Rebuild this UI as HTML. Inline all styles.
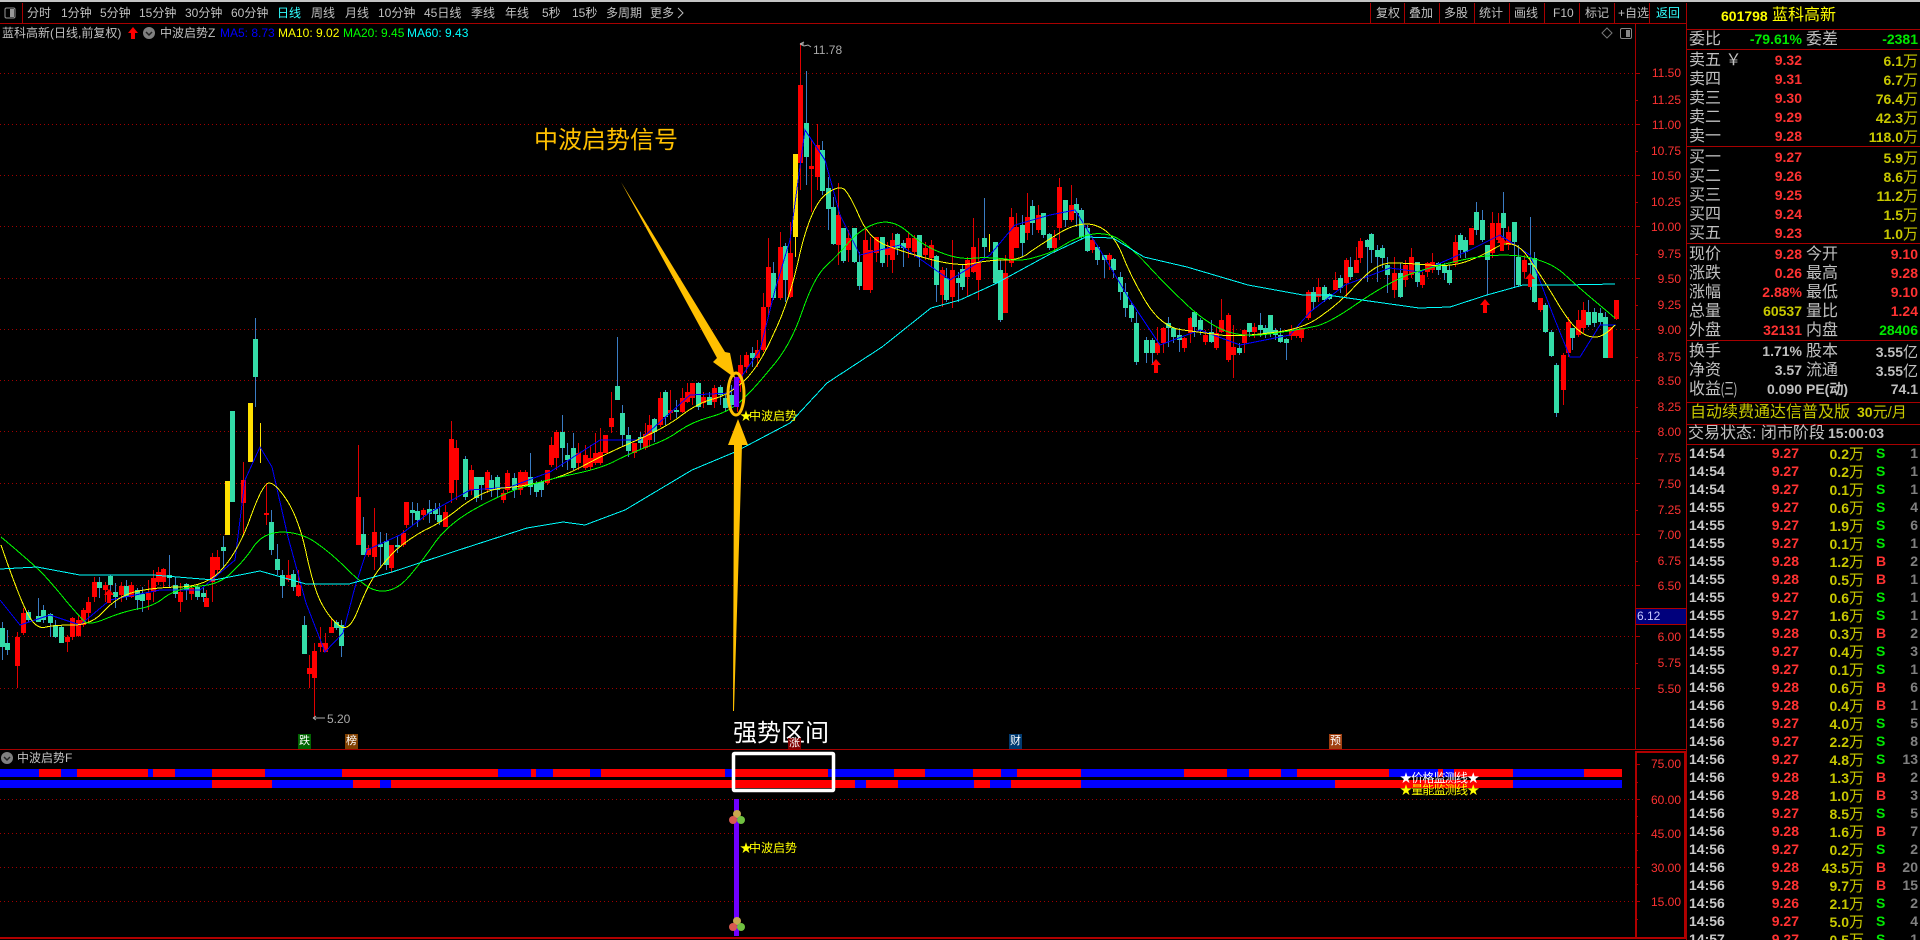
<!DOCTYPE html>
<html lang="zh"><head><meta charset="utf-8"><title>蓝科高新</title>
<style>
html,body{margin:0;padding:0;background:#000;}
#p{position:relative;width:1920px;height:940px;overflow:hidden;background:#000;font-family:"Liberation Sans","WenQuanYi Zen Hei","Noto Sans CJK SC",sans-serif;color:#c0c0c0;}
#p svg{position:absolute;left:0;top:0;}
.a{position:absolute;white-space:nowrap;}
.tb{font-size:12px;line-height:16px;top:5px;color:#c0c0c0;}
.ax{position:absolute;right:239px;font-size:12px;line-height:14px;color:#ff3232;}
.r{position:absolute;left:1687px;width:233px;height:19px;line-height:19px;}
.r>span{position:absolute;white-space:nowrap;top:0;}
.l{left:2px;font-size:16px;color:#c0c0c0;}
.l2{left:119px;font-size:16px;color:#c0c0c0;}
.p{right:118px;font:bold 14px/19px "Liberation Sans",sans-serif;color:#ff3232;}
.v{right:2px;font:bold 14px/19px "Liberation Sans",sans-serif;color:#c8c800;}
.v i,.k i{font:normal 15px/19px "WenQuanYi Zen Hei","Noto Sans CJK SC",sans-serif;}
.q{color:#ff3232;}.gy{color:#c0c0c0;}.gn{color:#00e800;}
.t{position:absolute;left:1687px;width:233px;height:18px;line-height:18px;overflow:hidden;font:bold 14px/18px "Liberation Sans",sans-serif;}
.t span{position:absolute;top:0;white-space:nowrap;}
.m{left:2px;color:#c8c8c8;}
.c{right:121px;color:#ff3232;}
.k{right:56px;color:#c8c800;}
.f{left:189px;}
.n{right:2px;color:#808080;}
.st{position:absolute;width:13px;height:15px;line-height:15px;font-size:11px;text-align:center;color:#fff;top:734px;}
.sg{letter-spacing:-3px;}
</style></head><body><div id="p">
<svg width="1920" height="940" viewBox="0 0 1920 940">
<rect x="0" y="0" width="1920" height="2" fill="#c4c4c4"/>
<g fill="none" stroke="#a00000" stroke-width="1" stroke-dasharray="1 3">
<path d="M0 73.5H1635M0 124.5H1635M0 175.5H1635M0 226.5H1635M0 278.5H1635M0 329.5H1635M0 380.5H1635M0 431.5H1635M0 483.5H1635M0 534.5H1635M0 585.5H1635M0 636.5H1635M0 688.5H1635M0 799.5H1635M0 833.5H1635M0 867.5H1635M0 901.5H1635"/>
</g>
<g shape-rendering="crispEdges" fill="none">
<path stroke="#a80000" d="M0 23.5H1686M22.5 3V23M1370.5 3V23M1404.5 3V23M1439.5 3V23M1474.5 3V23M1509.5 3V23M1544.5 3V23M1579.5 3V23M1614.5 3V23M1649.5 3V23M1635.5 23V749M1686.5 3V940M0 749.5H1686M1686 29.5H1920M1686 49.5H1920M1686 146.5H1920M1686 243.5H1920M1686 340.5H1920M1686 402.5H1920M1686 424.5H1920M1686 444.5H1920M1635 73.5H1640M1635 100.5H1638M1635 124.5H1640M1635 151.5H1638M1635 175.5H1640M1635 202.5H1638M1635 226.5H1640M1635 254.5H1638M1635 278.5H1640M1635 305.5H1638M1635 329.5H1640M1635 357.5H1638M1635 380.5H1640M1635 407.5H1638M1635 431.5H1640M1635 458.5H1638M1635 483.5H1640M1635 510.5H1638M1635 534.5H1640M1635 561.5H1638M1635 585.5H1640M1635 636.5H1640M1635 663.5H1638M1635 688.5H1640M1635 764.5H1640M1635 782.5H1638M1635 799.5H1640M1635 816.5H1638M1635 833.5H1640M1635 850.5H1638M1635 867.5H1640M1635 884.5H1638M1635 901.5H1640M1635 919.5H1638"/>
<path stroke="#b00000" stroke-width="2" d="M1636 751V939M1685 751V939M1635 752H1686M0 938H1686"/>
</g>
<rect x="1635.5" y="608.5" width="51" height="16" fill="#00007c" stroke="#b00000"/>
<!-- bars -->
<g shape-rendering="crispEdges">
<rect x="0" y="769" width="1622" height="8" fill="#0000ff"/>
<path fill="#f00" d="M39 769H61V777H39ZM77 769H148V777H77ZM153 769H175V777H153ZM212 769H265V777H212ZM342 769H498V777H342ZM531 769H536V777H531ZM553 769H590V777H553ZM601 769H725V777H601ZM733 769H828V777H733ZM894 769H925V777H894ZM973 769H1001V777H973ZM1017 769H1081V777H1017ZM1184 769H1227V777H1184ZM1249 769H1281V777H1249ZM1297 769H1389V777H1297ZM1438 769H1443V777H1438ZM1454 769H1513V777H1454ZM1584 769H1622V777H1584Z"/>
<rect x="0" y="780" width="1622" height="8" fill="#0000ff"/>
<path fill="#f00" d="M212 780H272V788H212ZM353 780H380V788H353ZM391 780H855V788H391ZM866 780H898V788H866ZM974 780H990V788H974ZM1011 780H1081V788H1011ZM1335 780H1513V788H1335Z"/>
</g>
<!-- candles -->
<g transform="translate(.5 0)" fill="none" shape-rendering="crispEdges">
<path stroke="#e00000" stroke-width="1" d="M17 632V688M23 608V635M67 635V652M72 617V640M78 615V637M83 608V627M88 597V623M94 577V602M105 582V602M121 582V602M131 582V598M148 580V610M153 570V602M158 567V585M163 568V588M180 583V612M191 585V600M206 590V607M212 553V602M217 550V575M243 462V535M266 483V525M288 560V582M298 570V597M309 655V688M314 643V717M320 627V652M325 633V652M331 618V633M358 445V545M368 545V557M374 508V570M391 545V573M403 530V547M406 502V528M423 508V520M445 505V527M451 421V503M456 440V500M471 465V495M487 470V493M503 490V503M507 470V493M520 470V495M525 470V487M547 470V485M551 437V467M556 430V470M578 443V470M585 445V470M590 445V470M595 433V465M600 428V465M605 435V453M611 392V433M634 443V458M645 423V450M649 415V447M660 392V427M670 390V420M682 388V413M687 383V403M692 383V405M703 392V408M714 385V408M737 400V412M740 355V392M746 352V373M757 340V367M763 293V352M768 238V317M780 232V300M790 222V298M800 43V190M811 139V212M817 124V190M838 183V265M848 230V262M865 229V290M870 237V293M876 237V262M887 242V267M892 233V273M908 233V258M914 235V257M925 242V260M931 240V267M942 267V307M952 240V308M967 257V297M973 218V273M978 238V300M1005 255V313M1011 208V267M1016 213V248M1027 193V240M1038 205V233M1054 230V253M1059 178V240M1071 185V222M1092 237V253M1109 253V270M1157 327V355M1163 327V353M1184 337V352M1190 317V343M1205 330V345M1216 327V350M1221 299V333M1228 313V362M1233 325V378M1244 330V353M1254 323V338M1291 325V340M1296 328V338M1301 328V342M1308 290V320M1318 278V302M1335 272V290M1346 258V297M1356 247V273M1360 238V263M1394 257V298M1405 260V287M1411 248V278M1422 272V288M1427 262V277M1432 253V273M1455 235V267M1471 228V245M1492 212V258M1498 213V243M1508 227V250M1524 255V278M1540 298V312M1563 353V405M1568 317V357M1578 310V337M1583 302V333M1610 327V358M1616 300V320"/>
<path stroke="#3a7cc4" stroke-width="1" d="M2 622V660M7 630V655M28 610V622M38 598V622M43 605V623M50 613V637M55 620V638M61 625V643M99 577V598M110 575V592M115 583V608M126 580V600M137 588V610M142 587V612M169 555V588M175 577V598M186 583V600M197 585V600M203 587V602M223 536V567M255 318V407M271 510V555M277 544V575M282 570V598M293 570V591M304 616V654M336 620V630M341 620V657M363 517V555M380 532V567M386 533V570M397 536V553M412 502V525M417 503V527M429 500V523M435 503V520M439 503V525M465 456V500M476 477V502M481 477V500M491 475V497M497 475V497M514 473V498M530 453V495M536 481V497M541 480V497M562 415V467M567 443V470M573 433V470M617 337V400M622 405V447M628 427V457M640 432V450M654 418V442M665 390V425M676 400V418M698 382V410M709 392V405M720 385V405M725 395V412M731 385V412M752 347V367M773 262V300M785 243V302M806 71V185M822 141V195M828 177V230M833 197V245M843 228V263M854 228V263M859 252V290M882 237V267M897 233V255M903 240V267M919 235V267M936 255V302M946 268V302M958 272V302M962 265V290M984 198V257M995 242V283M1000 260V322M1022 215V257M1032 200V235M1043 213V238M1049 233V250M1065 200V227M1076 198V227M1081 208V240M1087 225V252M1097 245V265M1104 255V278M1113 258V278M1120 272V300M1125 283V317M1131 302V322M1136 312V365M1146 337V363M1152 338V365M1168 317V347M1173 327V343M1179 328V352M1194 312V337M1200 318V335M1211 320V343M1239 343V355M1249 323V337M1260 313V337M1265 325V338M1270 315V337M1275 328V340M1280 328V343M1286 338V360M1313 287V310M1324 285V302M1329 293V300M1340 275V293M1350 257V280M1367 239V282M1371 233V263M1377 245V282M1382 245V268M1387 257V293M1400 263V298M1417 262V287M1438 262V275M1444 263V280M1449 265V285M1460 233V258M1465 237V258M1476 202V235M1482 210V242M1487 245V295M1503 192V240M1514 222V287M1518 245V287M1530 217V290M1534 252V303M1545 303V333M1551 330V357M1556 363V417M1572 328V350M1588 300V327M1594 308V327M1600 308V325M1605 312V358"/>
<path stroke="#f00" stroke-width="5" d="M17 637V666M23 613V633M67 637V642M72 618V637M78 620V636M83 610V625M88 602V613M94 582V597M105 585V590M121 586V595M131 585V597M148 593V600M153 578V592M158 572V582M163 569V582M180 592V602M191 588V594M206 598V607M212 557V582M217 557V570M243 480V503M266 513V515M288 575V580M298 585V596M309 668V674M314 651V678M320 643V647M325 643V652M331 627V633M358 497V545M368 548V555M374 532V557M391 545V568M403 533V545M406 502V525M423 510V515M445 512V527M451 439V493M456 448V480M471 470V490M487 472V490M503 493V500M507 473V490M520 472V490M525 472V485M547 470V483M551 445V465M556 432V458M578 453V463M585 455V468M590 458V467M595 453V463M600 452V463M605 435V453M611 418V427M634 443V453M645 434V448M649 425V440M660 398V425M670 410V413M682 398V412M687 392V402M692 383V398M703 397V403M714 388V402M740 365V383M746 355V367M757 350V358M763 307V350M768 267V307M780 247V298M790 253V297M800 85V163M811 166V169M817 145V177M838 215V245M848 238V250M865 240V290M870 250V290M876 237V253M887 248V255M892 240V260M908 238V248M914 238V252M925 248V255M931 245V258M942 270V295M952 270V297M967 260V277M973 247V272M978 263V280M1005 273V313M1011 217V263M1016 227V248M1027 217V233M1038 215V230M1054 238V248M1059 187V228M1071 205V220M1092 240V250M1109 255V260M1157 343V353M1163 328V343M1184 338V348M1190 318V333M1205 335V342M1216 333V348M1221 320V332M1228 315V360M1233 347V355M1244 330V343M1254 327V332M1291 330V336M1296 330V336M1301 328V338M1308 292V318M1318 287V297M1335 280V290M1346 260V283M1356 260V273M1360 241V258M1394 273V290M1405 265V280M1411 257V275M1422 275V285M1427 263V272M1432 262V270M1455 242V263M1471 228V245M1492 223V253M1498 223V240M1508 232V245M1524 260V272M1540 298V310M1563 355V390M1568 322V353M1578 320V335M1583 310V328M1610 327V358M1616 300V319"/>
<path stroke="#34dca8" stroke-width="5" d="M2 628V647M7 643V650M28 612V620M38 616V622M43 610V620M50 614V623M55 625V637M61 627V643M99 582V588M110 576V585M115 592V597M126 586V597M137 590V600M142 594V601M169 575V578M175 585V594M186 584V590M197 587V597M203 593V597M223 547V551M232 411V502M255 339V377M271 522V550M277 559V570M282 575V586M293 574V587M304 625V654M336 622V628M341 625V646M363 534V555M380 544V547M386 541V565M397 545V547M412 510V513M417 511V520M429 509V514M435 509V514M439 515V522M465 459V497M476 477V498M481 477V485M491 480V490M497 477V490M514 478V490M530 477V487M536 483V492M541 482V490M562 432V448M567 455V460M573 448V468M617 386V400M622 413V435M628 435V451M640 437V443M654 419V432M665 392V417M676 410V412M698 383V407M709 397V405M720 387V395M725 398V408M731 395V405M752 353V358M773 273V298M785 246V280M806 123V157M822 150V191M828 188V209M833 207V244M843 228V261M854 228V262M859 262V286M882 237V263M897 234V248M903 243V248M919 235V257M936 256V285M946 278V300M958 278V283M962 269V287M984 238V247M995 242V283M1000 270V320M1022 225V243M1032 206V223M1043 213V235M1049 234V248M1065 200V220M1076 204V213M1081 210V237M1087 228V251M1097 247V260M1104 255V260M1113 259V270M1120 277V292M1125 292V308M1131 305V318M1136 323V362M1146 340V353M1152 340V353M1168 323V328M1173 328V337M1179 335V340M1194 312V327M1200 320V330M1211 332V342M1239 348V353M1249 323V332M1260 325V330M1265 328V334M1270 315V333M1275 330V335M1280 335V342M1286 339V343M1313 292V302M1324 287V300M1329 294V299M1340 278V288M1350 267V277M1367 240V247M1371 234V250M1377 250V257M1382 248V258M1387 265V275M1400 273V297M1417 262V282M1438 263V270M1444 265V273M1449 270V283M1460 235V250M1465 240V252M1476 212V230M1482 220V240M1487 245V260M1503 213V228M1514 222V242M1518 257V285M1530 263V265M1534 258V302M1545 305V332M1551 332V356M1556 365V413M1572 328V338M1588 312V325M1594 312V323M1600 313V322M1605 317V358"/>
<path stroke="#ffe000" stroke-width="5" d="M227 481V535M250 403V462M795 154V237"/>
<path stroke="#ffe000" stroke-width="1" d="M795 237V257M260 423V463M989 234V252"/>
</g>
<!-- moving averages -->
<g fill="none" stroke-width="1" shape-rendering="crispEdges">
<polyline stroke="#0000ff" points="0,600 20,625 50,615 80,625 110,600 160,590 200,590 235,560 245,480 260,447 272,467 288,537 306,603 325,652 343,633 355,587 367,550 400,535 429,513 470,490 510,487 550,472 600,440 640,440 690,395 730,393 760,350 775,290 790,240 805,130 825,160 840,215 860,255 900,245 950,280 990,255 1015,225 1050,215 1075,210 1100,250 1130,300 1160,345 1200,330 1240,345 1290,335 1310,312 1345,285 1390,268 1420,272 1470,250 1500,235 1530,255 1555,320 1570,357 1580,357 1600,325 1616,325"/>
<path stroke="#ffff00" d="M1 545Q21 603 29 616Q37 630 46 627Q55 625 73 625Q92 625 104 611Q116 598 131 593Q147 588 177 587Q208 587 223 568Q239 550 251 516Q263 483 269 483Q276 483 288 502Q300 522 307 557Q315 593 323 606Q331 620 340 626Q349 633 358 610Q367 587 375 575Q383 563 396 550Q410 538 425 530Q441 523 462 506Q484 490 502 488Q520 487 541 482Q563 477 583 466Q603 455 635 441Q667 427 682 415Q698 403 713 399Q729 395 744 381Q759 367 774 333Q790 300 800 253Q811 207 825 195Q839 184 845 190Q851 197 860 218Q870 240 888 246Q906 253 933 260Q960 267 975 263Q990 260 1005 260Q1021 260 1030 252Q1040 245 1061 232Q1082 220 1097 226Q1113 232 1122 254Q1131 277 1146 302Q1162 328 1183 330Q1205 333 1220 335Q1236 337 1269 333Q1303 330 1321 316Q1340 303 1358 283Q1376 263 1391 263Q1407 263 1428 265Q1450 267 1465 262Q1480 257 1497 247Q1514 237 1528 257Q1542 277 1554 297Q1566 318 1575 327Q1585 337 1594 337Q1603 338 1615 325"/>
<path stroke="#00ff00" d="M1 537Q31 562 43 574Q55 587 67 602Q80 617 84 621Q89 626 105 619Q122 612 137 609Q153 607 165 597Q178 588 199 586Q220 585 232 572Q245 560 254 546Q263 533 281 532Q300 532 315 542Q331 553 346 568Q361 583 370 588Q380 593 390 590Q401 587 412 573Q423 560 436 541Q450 523 473 510Q496 497 520 488Q545 480 574 474Q603 468 617 460Q631 453 649 446Q667 440 679 431Q692 422 710 417Q729 412 741 401Q753 390 771 368Q790 347 802 312Q814 277 826 266Q838 255 850 241Q863 227 878 223Q894 219 909 233Q925 247 942 253Q960 260 975 258Q991 257 1006 259Q1021 262 1036 257Q1052 253 1064 245Q1076 237 1093 234Q1110 232 1123 242Q1137 253 1152 270Q1168 287 1186 304Q1205 322 1223 330Q1242 338 1269 334Q1297 330 1312 327Q1327 325 1358 303Q1389 282 1410 274Q1431 267 1462 260Q1493 253 1520 256Q1548 260 1563 273Q1578 287 1596 302L1615 318"/>
<polyline stroke="#00ffff" points="0,569 37,567 80,575 153,575 214,580 260,571 306,584 349,584 392,572 465,548 527,528 563,522 585,525 625,510 692,470 735,452 790,423 827,383 882,347 931,308 960,300 997,283 1052,253 1086,237 1113,238 1144,257 1187,267 1248,285 1303,295 1327,295 1376,302 1419,308 1450,307 1487,295 1523,285 1566,285 1615,284"/>
</g>
<!-- markers -->
<g fill="#f00">
<path d="M109 589l5 6h-3v8h-4v-8h-3zM1156 359l5 6h-3v8h-4v-8h-3zM1485 299l5 6h-3v8h-4v-8h-3zM1502 237l5 6h-3v8h-4v-8h-3zM1530 273l5 6h-3v8h-4v-8h-3z"/>
<path d="M133 27l5 6h-3v6h-4v-6h-3z"/>
</g>
<path d="M800 44h4M800 44l4-2M800 44l4 2M804 46l4-1 3 2" stroke="#aaa" fill="none"/>
<path d="M313 718h12M313 718l3-2M313 718l3 2" stroke="#aaa" fill="none"/>
<!-- purple / signal -->
<rect x="734" y="377" width="5" height="30" fill="#7000ff"/>
<polygon points="621,182 725,352 730,353 735,378 713,362 717,358" fill="#ffc000"/>
<polygon points="738,419 748,445 742,445 734,711 733,711 734,445 728,445" fill="#ffc000"/>
<ellipse cx="736" cy="394" rx="8" ry="21" fill="none" stroke="#ffc000" stroke-width="3"/>
<rect x="734" y="799" width="5" height="137" fill="#7000ff"/>
<g>
<circle cx="737" cy="814" r="4" fill="#c8a850"/><circle cx="733" cy="820" r="4" fill="#d85a50"/><circle cx="741" cy="820" r="4" fill="#70c040"/>
<circle cx="737" cy="921" r="4" fill="#c8a850"/><circle cx="733" cy="927" r="4" fill="#d85a50"/><circle cx="741" cy="927" r="4" fill="#70c040"/>
</g>
<rect x="733.5" y="753.5" width="100" height="37" fill="none" stroke="#fff" stroke-width="3.5" rx="1"/>
<!-- icons -->
<rect x="5" y="8" width="10" height="10" rx="1.5" fill="none" stroke="#999"/><rect x="10" y="9" width="4" height="8" fill="#999"/>
<circle cx="149" cy="33" r="6" fill="#808080"/><path d="M146 32l3 3 3-3" stroke="#222" stroke-width="1.5" fill="none"/>
<circle cx="7" cy="758" r="6" fill="#808080"/><path d="M4 757l3 3 3-3" stroke="#222" stroke-width="1.5" fill="none"/>
<path d="M1607 28l5 5-5 5-5-5z" fill="none" stroke="#777"/>
<rect x="1620.5" y="28.5" width="11" height="10" rx="1.5" fill="none" stroke="#888"/><rect x="1626" y="30" width="4" height="7" fill="#888"/>
<path d="M678 8l5 5-5 5" stroke="#bbb" fill="none"/>
</svg>

<span class="a tb" style="left:27px">分时</span>
<span class="a tb" style="left:61px">1分钟</span>
<span class="a tb" style="left:100px">5分钟</span>
<span class="a tb" style="left:139px">15分钟</span>
<span class="a tb" style="left:185px">30分钟</span>
<span class="a tb" style="left:231px">60分钟</span>
<span class="a tb" style="left:277px;color:#3ff">日线</span>
<span class="a tb" style="left:311px">周线</span>
<span class="a tb" style="left:345px">月线</span>
<span class="a tb" style="left:378px">10分钟</span>
<span class="a tb" style="left:424px">45日线</span>
<span class="a tb" style="left:471px">季线</span>
<span class="a tb" style="left:505px">年线</span>
<span class="a tb" style="left:542px">5秒</span>
<span class="a tb" style="left:572px">15秒</span>
<span class="a tb" style="left:606px">多周期</span>
<span class="a tb" style="left:650px">更多</span>
<span class="a tb" style="left:1376px">复权</span>
<span class="a tb" style="left:1409px">叠加</span>
<span class="a tb" style="left:1444px">多股</span>
<span class="a tb" style="left:1479px">统计</span>
<span class="a tb" style="left:1514px">画线</span>
<span class="a tb" style="left:1553px">F10</span>
<span class="a tb" style="left:1585px">标记</span>
<span class="a tb" style="left:1618px">+自选</span>
<span class="a tb" style="left:1656px;color:#3ff">返回</span>

<span class="a" style="left:2px;top:25px;font-size:12px;line-height:16px">蓝科高新(日线,前复权)</span>
<span class="a" style="left:160px;top:25px;font-size:12px;line-height:16px">中波启势Z</span>
<span class="a" style="left:220px;top:25px;font-size:12px;line-height:16px;color:#00f">MA5: 8.73</span>
<span class="a" style="left:278px;top:25px;font-size:12px;line-height:16px;color:#ff0">MA10: 9.02</span>
<span class="a" style="left:343px;top:25px;font-size:12px;line-height:16px;color:#0f0">MA20: 9.45</span>
<span class="a" style="left:407px;top:25px;font-size:12px;line-height:16px;color:#0ff">MA60: 9.43</span>
<span class="a" style="left:813px;top:43px;font-size:12px;line-height:14px;color:#aaa">11.78</span>
<span class="a" style="left:327px;top:712px;font-size:12px;line-height:14px;color:#aaa">5.20</span>

<span class="a" style="left:534px;top:127px;font-size:24px;line-height:28px;color:#ffc000">中波启势信号</span>
<span class="a" style="left:733px;top:720px;font-size:24px;line-height:28px;color:#fff">强势区间</span>
<span class="a" style="left:740px;top:408px;font-size:12px;line-height:16px;color:#ff0"><span class="sg">★</span>中波启势</span>
<span class="a" style="left:740px;top:840px;font-size:12px;line-height:16px;color:#ff0"><span class="sg">★</span>中波启势</span>
<span class="a" style="left:17px;top:750px;font-size:12px;line-height:16px">中波启势F</span>
<span class="a" style="left:1400px;top:770px;font-size:12px;line-height:16px;color:#fff;letter-spacing:-.8px">★价格监测线★</span>
<span class="a" style="left:1400px;top:782px;font-size:12px;line-height:16px;color:#ff0;letter-spacing:-.8px">★量能监测线★</span>

<span class="st" style="left:298px;background:#006400">跌</span>
<span class="st" style="left:345px;background:#804000">榜</span>
<span class="st" style="left:788px;background:#800000;top:738px;height:11px;line-height:11px">涨</span>
<span class="st" style="left:1009px;background:#003a70">财</span>
<span class="st" style="left:1329px;background:#a04010">预</span>

<span class="ax" style="top:66px">11.50</span><span class="ax" style="top:93px">11.25</span><span class="ax" style="top:118px">11.00</span><span class="ax" style="top:144px">10.75</span><span class="ax" style="top:169px">10.50</span><span class="ax" style="top:195px">10.25</span><span class="ax" style="top:220px">10.00</span><span class="ax" style="top:247px">9.75</span><span class="ax" style="top:272px">9.50</span><span class="ax" style="top:298px">9.25</span><span class="ax" style="top:323px">9.00</span><span class="ax" style="top:350px">8.75</span><span class="ax" style="top:374px">8.50</span><span class="ax" style="top:400px">8.25</span><span class="ax" style="top:425px">8.00</span><span class="ax" style="top:451px">7.75</span><span class="ax" style="top:477px">7.50</span><span class="ax" style="top:503px">7.25</span><span class="ax" style="top:528px">7.00</span><span class="ax" style="top:554px">6.75</span><span class="ax" style="top:579px">6.50</span><span class="ax" style="top:630px">6.00</span><span class="ax" style="top:656px">5.75</span><span class="ax" style="top:682px">5.50</span>
<span class="a" style="left:1637px;top:609px;font-size:12px;line-height:14px;color:#c8c8ff">6.12</span>
<span class="ax" style="top:757px">75.00</span><span class="ax" style="top:793px">60.00</span><span class="ax" style="top:827px">45.00</span><span class="ax" style="top:861px">30.00</span><span class="ax" style="top:895px">15.00</span>

<span class="a" style="left:1721px;top:6px;font:bold 14px/20px 'Liberation Sans',sans-serif;color:#ff0">601798</span>
<span class="a" style="left:1772px;top:6px;font-size:16px;line-height:20px;color:#ff0">蓝科高新</span>

<div class="r" style="top:30px"><span class="l">委比</span><span class="p gn" style="color:#00e800">-79.61%</span><span class="l2">委差</span><span class="v" style="color:#00e800">-2381</span></div>
<div class="r" style="top:51px"><span class="l">卖五 ￥</span><span class="p">9.32</span><span class="v">6.1<i>万</i></span></div>
<div class="r" style="top:70px"><span class="l">卖四</span><span class="p">9.31</span><span class="v">6.7<i>万</i></span></div>
<div class="r" style="top:89px"><span class="l">卖三</span><span class="p">9.30</span><span class="v">76.4<i>万</i></span></div>
<div class="r" style="top:108px"><span class="l">卖二</span><span class="p">9.29</span><span class="v">42.3<i>万</i></span></div>
<div class="r" style="top:127px"><span class="l">卖一</span><span class="p">9.28</span><span class="v">118.0<i>万</i></span></div>
<div class="r" style="top:148px"><span class="l">买一</span><span class="p">9.27</span><span class="v">5.9<i>万</i></span></div>
<div class="r" style="top:167px"><span class="l">买二</span><span class="p">9.26</span><span class="v">8.6<i>万</i></span></div>
<div class="r" style="top:186px"><span class="l">买三</span><span class="p">9.25</span><span class="v">11.2<i>万</i></span></div>
<div class="r" style="top:205px"><span class="l">买四</span><span class="p">9.24</span><span class="v">1.5<i>万</i></span></div>
<div class="r" style="top:224px"><span class="l">买五</span><span class="p">9.23</span><span class="v">1.0<i>万</i></span></div>
<div class="r" style="top:245px"><span class="l">现价</span><span class="p">9.28</span><span class="l2">今开</span><span class="v q">9.10</span></div>
<div class="r" style="top:264px"><span class="l">涨跌</span><span class="p">0.26</span><span class="l2">最高</span><span class="v q">9.28</span></div>
<div class="r" style="top:283px"><span class="l">涨幅</span><span class="p">2.88%</span><span class="l2">最低</span><span class="v q">9.10</span></div>
<div class="r" style="top:302px"><span class="l">总量</span><span class="p" style="color:#c8c800">60537</span><span class="l2">量比</span><span class="v q">1.24</span></div>
<div class="r" style="top:321px"><span class="l">外盘</span><span class="p">32131</span><span class="l2">内盘</span><span class="v gn">28406</span></div>
<div class="r" style="top:342px"><span class="l">换手</span><span class="p gy">1.71%</span><span class="l2">股本</span><span class="v gy">3.55<i>亿</i></span></div>
<div class="r" style="top:361px"><span class="l">净资</span><span class="p gy">3.57</span><span class="l2">流通</span><span class="v gy">3.55<i>亿</i></span></div>
<div class="r" style="top:380px"><span class="l">收益<span style="display:inline-block;transform:scaleX(.6);transform-origin:left">(三)</span></span><span class="p gy">0.090</span><span class="l2" style="font:bold 14px/19px 'Liberation Sans','WenQuanYi Zen Hei',sans-serif">PE(动)</span><span class="v gy">74.1</span></div>
<div class="r" style="top:403px"><span class="l" style="left:3px;color:#c8c800">自动续费通达信普及版</span><span class="l" style="left:170px;color:#c8c800;font-size:15px"><b style="font-size:14px">30</b>元/月</span></div>
<div class="r" style="top:424px"><span class="l" style="left:1px">交易状态: 闭市阶段</span><span class="l" style="left:141px;font:bold 14px/19px 'Liberation Sans',sans-serif">15:00:03</span></div>

<div class="t" style="top:444px"><span class="m">14:54</span><span class="c">9.27</span><span class="k">0.2<i>万</i></span><span class="f gn">S</span><span class="n">1</span></div>
<div class="t" style="top:462px"><span class="m">14:54</span><span class="c">9.27</span><span class="k">0.2<i>万</i></span><span class="f gn">S</span><span class="n">1</span></div>
<div class="t" style="top:480px"><span class="m">14:54</span><span class="c">9.27</span><span class="k">0.1<i>万</i></span><span class="f gn">S</span><span class="n">1</span></div>
<div class="t" style="top:498px"><span class="m">14:55</span><span class="c">9.27</span><span class="k">0.6<i>万</i></span><span class="f gn">S</span><span class="n">4</span></div>
<div class="t" style="top:516px"><span class="m">14:55</span><span class="c">9.27</span><span class="k">1.9<i>万</i></span><span class="f gn">S</span><span class="n">6</span></div>
<div class="t" style="top:534px"><span class="m">14:55</span><span class="c">9.27</span><span class="k">0.1<i>万</i></span><span class="f gn">S</span><span class="n">1</span></div>
<div class="t" style="top:552px"><span class="m">14:55</span><span class="c">9.28</span><span class="k">1.2<i>万</i></span><span class="f q">B</span><span class="n">2</span></div>
<div class="t" style="top:570px"><span class="m">14:55</span><span class="c">9.28</span><span class="k">0.5<i>万</i></span><span class="f q">B</span><span class="n">1</span></div>
<div class="t" style="top:588px"><span class="m">14:55</span><span class="c">9.27</span><span class="k">0.6<i>万</i></span><span class="f gn">S</span><span class="n">1</span></div>
<div class="t" style="top:606px"><span class="m">14:55</span><span class="c">9.27</span><span class="k">1.6<i>万</i></span><span class="f gn">S</span><span class="n">1</span></div>
<div class="t" style="top:624px"><span class="m">14:55</span><span class="c">9.28</span><span class="k">0.3<i>万</i></span><span class="f q">B</span><span class="n">2</span></div>
<div class="t" style="top:642px"><span class="m">14:55</span><span class="c">9.27</span><span class="k">0.4<i>万</i></span><span class="f gn">S</span><span class="n">3</span></div>
<div class="t" style="top:660px"><span class="m">14:55</span><span class="c">9.27</span><span class="k">0.1<i>万</i></span><span class="f gn">S</span><span class="n">1</span></div>
<div class="t" style="top:678px"><span class="m">14:56</span><span class="c">9.28</span><span class="k">0.6<i>万</i></span><span class="f q">B</span><span class="n">6</span></div>
<div class="t" style="top:696px"><span class="m">14:56</span><span class="c">9.28</span><span class="k">0.4<i>万</i></span><span class="f q">B</span><span class="n">1</span></div>
<div class="t" style="top:714px"><span class="m">14:56</span><span class="c">9.27</span><span class="k">4.0<i>万</i></span><span class="f gn">S</span><span class="n">5</span></div>
<div class="t" style="top:732px"><span class="m">14:56</span><span class="c">9.27</span><span class="k">2.2<i>万</i></span><span class="f gn">S</span><span class="n">8</span></div>
<div class="t" style="top:750px"><span class="m">14:56</span><span class="c">9.27</span><span class="k">4.8<i>万</i></span><span class="f gn">S</span><span class="n">13</span></div>
<div class="t" style="top:768px"><span class="m">14:56</span><span class="c">9.28</span><span class="k">1.3<i>万</i></span><span class="f q">B</span><span class="n">2</span></div>
<div class="t" style="top:786px"><span class="m">14:56</span><span class="c">9.28</span><span class="k">1.0<i>万</i></span><span class="f q">B</span><span class="n">3</span></div>
<div class="t" style="top:804px"><span class="m">14:56</span><span class="c">9.27</span><span class="k">8.5<i>万</i></span><span class="f gn">S</span><span class="n">5</span></div>
<div class="t" style="top:822px"><span class="m">14:56</span><span class="c">9.28</span><span class="k">1.6<i>万</i></span><span class="f q">B</span><span class="n">7</span></div>
<div class="t" style="top:840px"><span class="m">14:56</span><span class="c">9.27</span><span class="k">0.2<i>万</i></span><span class="f gn">S</span><span class="n">2</span></div>
<div class="t" style="top:858px"><span class="m">14:56</span><span class="c">9.28</span><span class="k">43.5<i>万</i></span><span class="f q">B</span><span class="n">20</span></div>
<div class="t" style="top:876px"><span class="m">14:56</span><span class="c">9.28</span><span class="k">9.7<i>万</i></span><span class="f q">B</span><span class="n">15</span></div>
<div class="t" style="top:894px"><span class="m">14:56</span><span class="c">9.26</span><span class="k">2.1<i>万</i></span><span class="f gn">S</span><span class="n">2</span></div>
<div class="t" style="top:912px"><span class="m">14:56</span><span class="c">9.27</span><span class="k">5.0<i>万</i></span><span class="f gn">S</span><span class="n">4</span></div>
<div class="t" style="top:930px"><span class="m">14:57</span><span class="c">9.27</span><span class="k">0.5<i>万</i></span><span class="f gn">S</span><span class="n">1</span></div>
</div></body></html>
